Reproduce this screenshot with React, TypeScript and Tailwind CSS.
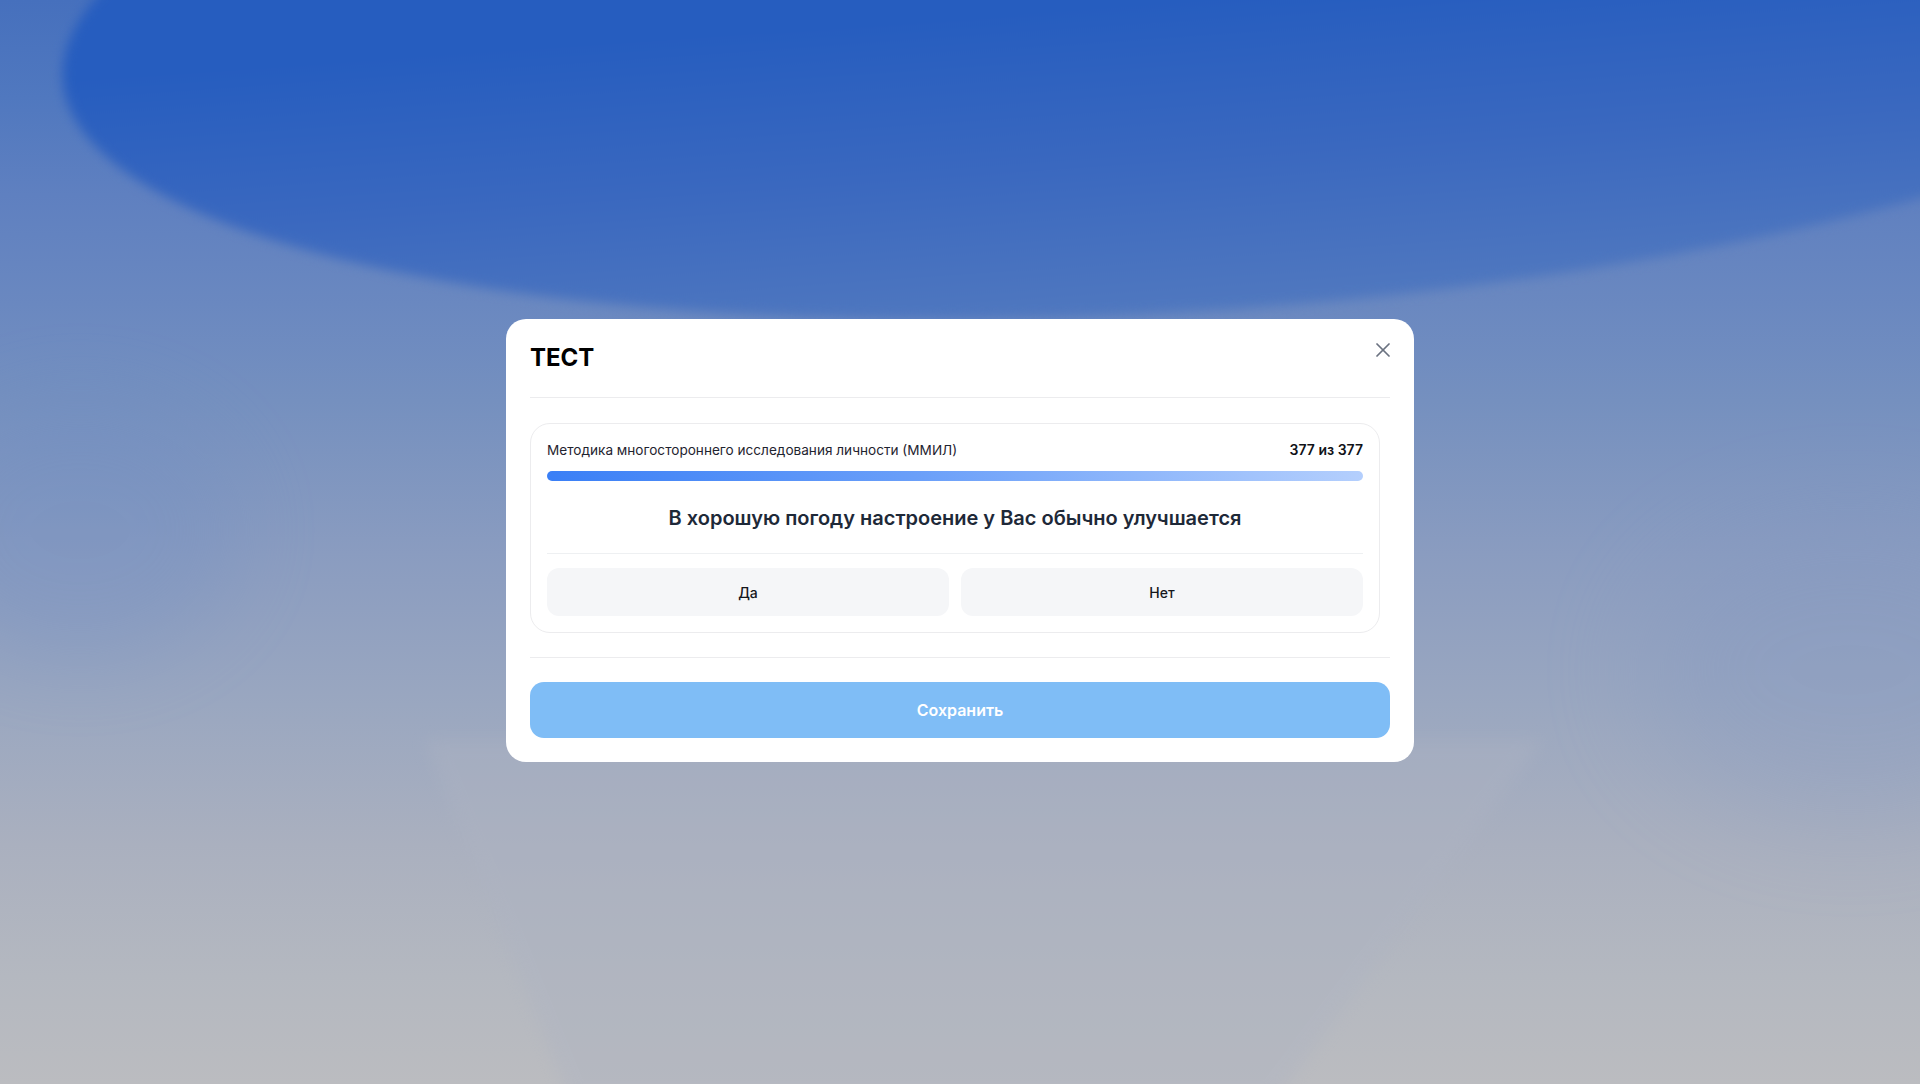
import React from "react";

export default function App() {
  return (
    <div
      className="relative w-full h-[1084px] overflow-hidden bg-[linear-gradient(to_bottom,#4670bd_0%,#5078bf_9%,#5f80c0_18%,#6a88c0_28%,#7590bf_37%,#8a9cc0_51%,#9aa7c0_65%,#aab0bf_78%,#b4b8c0_90%,#bbbcc0_100%)]"
      style={{ fontFamily: "Inter, 'Noto Sans', sans-serif" }}
    >
      {/* background shapes */}
      <div className="absolute left-[60px] top-[-310px] w-[2300px] h-[620px] rounded-[50%] rotate-[-4deg] blur-[6px] bg-[linear-gradient(to_bottom,#265dbf_50%,#3a68bf_75%,#5078bf_100%)]" />
      <div className="absolute left-[-80px] top-[400px] w-[320px] h-[260px] rounded-[50%] blur-[40px] bg-[#6c8bc3] opacity-25" />
      <div className="absolute left-[1640px] top-[520px] w-[420px] h-[300px] rounded-[50%] blur-[50px] bg-[#7f95c2] opacity-25" />
      <div className="absolute left-[424px] top-[740px] w-[1120px] h-[360px] blur-[8px] opacity-40">
        <div className="h-full w-full bg-[#adb3c2] [clip-path:polygon(0_0,100%_0,76%_100%,13%_100%)]" />
      </div>

      {/* modal */}
      <div className="relative flex h-full w-full items-center justify-center">
        <div className="w-[908px] rounded-[20px] bg-white p-6 mt-[-3px]">
          {/* header */}
          <div className="flex items-start justify-between border-b border-[#ececee] pb-6">
            <h1 className="text-[24px] leading-[30px] font-bold text-black">ТЕСТ</h1>
            <button className="text-[#6b7280]" aria-label="close">
              <svg width="14" height="14" viewBox="0 0 14 14" fill="none" stroke="currentColor" strokeWidth="1.7" strokeLinecap="round">
                <path d="M1 1L13 13" />
                <path d="M13 1L1 13" />
              </svg>
            </button>
          </div>

          {/* card */}
          <div className="mt-[25px] mr-[10px] rounded-[20px] border border-[#ececee] p-4">
            <div className="flex items-center justify-between h-[20px]">
              <span className="text-[13.6px] leading-5 text-[#1f2430]">
                Методика многостороннего исследования личности (ММИЛ)
              </span>
              <span className="text-[14px] leading-5 font-semibold text-[#111318]">377 из 377</span>
            </div>
            <div className="mt-[11px] h-[10px] w-full rounded-full bg-[linear-gradient(to_right,#3a7ff6,#6a9ff9_45%,#b4cffd)]" />
            <div className="mt-[23px] border-b border-[#eef0f2] pb-[21px] text-center text-[20px] leading-7 font-semibold text-[#1e2938]">
              В хорошую погоду настроение у Вас обычно улучшается
            </div>
            <div className="mt-[14px] grid grid-cols-2 gap-3">
              <button className="h-12 rounded-xl bg-[#f5f6f8] text-[14px] font-medium text-[#15171c]">Да</button>
              <button className="h-12 rounded-xl bg-[#f5f6f8] text-[14px] font-medium text-[#15171c]">Нет</button>
            </div>
          </div>

          <div className="mt-6 border-t border-[#ececee]" />

          <button className="mt-6 h-14 w-full rounded-[14px] bg-[#7fbdf6] text-[16px] font-semibold text-white">
            Сохранить
          </button>
        </div>
      </div>
    </div>
  );
}
